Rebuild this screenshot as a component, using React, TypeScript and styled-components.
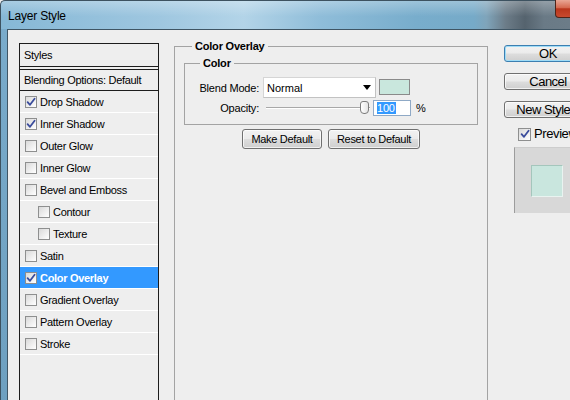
import styled, { createGlobalStyle } from "styled-components";

const GlobalStyle = createGlobalStyle`
  html, body {
    margin: 0;
    padding: 0;
  }
  body {
    width: 570px;
    height: 400px;
    overflow: hidden;
    background: #eeeeee;
    font-family: "Liberation Sans", Arial, sans-serif;
    font-size: 11px;
    color: #000;
  }
`;

interface StyleItem {
  label: string;
  checked?: boolean;
  indent?: boolean;
  active?: boolean;
}

const styleItems: StyleItem[] = [
  { label: "Drop Shadow", checked: true },
  { label: "Inner Shadow", checked: true },
  { label: "Outer Glow" },
  { label: "Inner Glow" },
  { label: "Bevel and Emboss" },
  { label: "Contour", indent: true },
  { label: "Texture", indent: true },
  { label: "Satin" },
  { label: "Color Overlay", checked: true, active: true },
  { label: "Gradient Overlay" },
  { label: "Pattern Overlay" },
  { label: "Stroke" },
];

const CheckMark = () => (
  <svg width="10" height="10" viewBox="0 0 10 10">
    <path
      d="M1.6 5.2 L4 7.8 L8.6 1.8"
      fill="none"
      stroke="#3a4c9c"
      strokeWidth="1.8"
      strokeLinecap="round"
      strokeLinejoin="round"
    />
  </svg>
);

const Check = ({ checked, size = 12 }: { checked?: boolean; size?: number }) => (
  <CheckBox $size={size}>{checked && <CheckMark />}</CheckBox>
);

const App = () => {
  return (
    <>
      <GlobalStyle />
      <Window>
        <TitleBar>
          <TitleText>Layer Style</TitleText>
          <CloseButton />
        </TitleBar>
        <Body>
          <Panel>
            <StylesList>
              <ListHeader>Styles</ListHeader>
              <BlendingRow>Blending Options: Default</BlendingRow>
              <Rows>
                {styleItems.map((item) => (
                  <StyleRow key={item.label} $indent={item.indent} $active={item.active}>
                    <Check checked={item.checked} />
                    <span>{item.label}</span>
                  </StyleRow>
                ))}
              </Rows>
            </StylesList>

            <MainColumn>
              <Group $outer>
                <GroupTitle $offset={8}>Color Overlay</GroupTitle>
                <Group>
                  <GroupTitle $offset={15}>Color</GroupTitle>
                  <FieldRow>
                    <FieldLabel>Blend Mode:</FieldLabel>
                    <Select>
                      <span>Normal</span>
                      <svg width="8" height="5" viewBox="0 0 8 5">
                        <path d="M0 0 H8 L4 5 Z" fill="#000" />
                      </svg>
                    </Select>
                    <Swatch />
                  </FieldRow>
                  <FieldRow $small>
                    <FieldLabel $gap={7}>Opacity:</FieldLabel>
                    <Slider>
                      <Track />
                      <Thumb />
                    </Slider>
                    <NumberInput>
                      <Selected>100</Selected>
                    </NumberInput>
                    <Unit>%</Unit>
                  </FieldRow>
                </Group>
                <ButtonRow>
                  <PushButton $width={80}>Make Default</PushButton>
                  <PushButton $width={92}>Reset to Default</PushButton>
                </ButtonRow>
              </Group>
            </MainColumn>

            <SideColumn>
              <DialogButton $default>OK</DialogButton>
              <DialogButton>Cancel</DialogButton>
              <DialogButton>New Style...</DialogButton>
              <PreviewToggle>
                <Check checked size={13} />
                <span>Preview</span>
              </PreviewToggle>
              <PreviewBox>
                <PreviewSwatch />
              </PreviewBox>
            </SideColumn>
          </Panel>
        </Body>
      </Window>
    </>
  );
};

const Window = styled.div`
  width: 640px;
  height: 400px;
  display: flex;
  flex-direction: column;
  overflow: hidden;
`;

const TitleBar = styled.div`
  height: 29px;
  flex-shrink: 0;
  display: flex;
  align-items: flex-start;
  justify-content: space-between;
  box-sizing: border-box;
  border-top: 1px solid #3d5260;
  border-left: 1px solid #3d5260;
  border-top-left-radius: 5px;
  background:
    linear-gradient(to bottom, rgba(255, 255, 255, 0.28), rgba(255, 255, 255, 0) 55%),
    linear-gradient(
      to right,
      #86b8d6 0%,
      #9fc7e0 25%,
      #b3d4e8 38%,
      #8fbdd9 50%,
      #78adcc 65%,
      #76aac8 74%,
      #7fa4ba 76%,
      #6c7c88 79%,
      #55636e 82%,
      #6a7a86 85%,
      #72828e 100%
    );
`;

const TitleText = styled.div`
  padding: 8px 0 0 7px;
  font-size: 12px;
  line-height: 14px;
  letter-spacing: -0.2px;
  color: #000;
`;

const CloseButton = styled.div`
  width: 43px;
  height: 18px;
  margin-top: -1px;
  margin-right: 42px;
  box-sizing: border-box;
  border: 1px solid #4e2419;
  border-top: none;
  border-radius: 0 0 4px 4px;
  background: linear-gradient(to bottom, #e9a795 0%, #d56a50 45%, #b9361c 52%, #c84a2e 100%);
`;

const Body = styled.div`
  flex: 1;
  display: flex;
  padding-left: 7px;
  background: linear-gradient(to bottom, #79abcb, #6d9fbf);
  border-left: 1px solid #3d5260;
`;

const Panel = styled.div`
  flex: 1;
  display: flex;
  align-items: flex-start;
  padding: 10px 0 0 11px;
  background: #eeeeee;
  border-top: 1px solid #3f5564;
  border-left: 1px solid #3f5564;
  margin-left: -1px;
`;

const StylesList = styled.div`
  width: 140px;
  height: 380px;
  margin-top: 3px;
  flex-shrink: 0;
  box-sizing: border-box;
  border: 1px solid #1c1c1c;
  letter-spacing: -0.3px;
`;

const ListHeader = styled.div`
  height: 22px;
  display: flex;
  align-items: center;
  padding-left: 4px;
  border-bottom: 1px solid #1c1c1c;
`;

const BlendingRow = styled.div`
  height: 20px;
  margin-top: 2px;
  display: flex;
  align-items: center;
  padding-left: 4px;
  border-top: 1px solid #1c1c1c;
  border-bottom: 1px solid #1c1c1c;
`;

const Rows = styled.div`
  padding-top: 0;
`;

const StyleRow = styled.div<{ $indent?: boolean; $active?: boolean }>`
  height: 21px;
  display: flex;
  align-items: center;
  gap: 3px;
  padding-left: ${(p) => (p.$indent ? 18 : 5)}px;
  border-bottom: 1px solid #ffffff;
  background: ${(p) => (p.$active ? "#3399ff" : "transparent")};
  color: ${(p) => (p.$active ? "#ffffff" : "#000")};
  font-weight: ${(p) => (p.$active ? "bold" : "normal")};
`;

const CheckBox = styled.span<{ $size: number }>`
  width: ${(p) => p.$size}px;
  height: ${(p) => p.$size}px;
  flex-shrink: 0;
  box-sizing: border-box;
  display: inline-flex;
  align-items: center;
  justify-content: center;
  border: 1px solid #8e8f8f;
  background: linear-gradient(135deg, #d9d9d9 0%, #f4f4f4 70%, #ffffff 100%);
`;

const MainColumn = styled.div`
  margin-left: 15px;
  flex-shrink: 0;
`;

const Group = styled.fieldset<{ $outer?: boolean }>`
  margin: 0;
  min-width: 0;
  box-sizing: border-box;
  width: ${(p) => (p.$outer ? 314 : 294)}px;
  height: ${(p) => (p.$outer ? "380px" : "auto")};
  padding: ${(p) => (p.$outer ? "4px 9px 0" : "7px 0 8px")};
  border: 1px solid #a3a3a3;
`;

const GroupTitle = styled.legend<{ $offset: number }>`
  margin-left: ${(p) => p.$offset}px;
  padding: 0 3px;
  font-weight: bold;
  font-size: 11px;
  line-height: 13px;
  letter-spacing: -0.2px;
`;

const FieldRow = styled.div<{ $small?: boolean }>`
  display: flex;
  align-items: center;
  height: ${(p) => (p.$small ? 16 : 21)}px;
  margin-top: ${(p) => (p.$small ? 2 : 0)}px;
`;

const FieldLabel = styled.span<{ $gap?: number }>`
  width: 74px;
  margin-right: ${(p) => p.$gap ?? 4}px;
  text-align: right;
  letter-spacing: -0.2px;
`;

const Select = styled.div`
  width: 113px;
  height: 21px;
  box-sizing: border-box;
  display: flex;
  align-items: center;
  justify-content: space-between;
  padding: 0 4px 0 3px;
  background: #ffffff;
  border: 1px solid #d5d5d5;
  border-right-color: #c2c2c2;
  border-bottom-color: #c2c2c2;
`;

const Swatch = styled.div`
  width: 31px;
  height: 16px;
  margin-left: 3px;
  margin-top: -2px;
  box-sizing: border-box;
  border: 1px solid #8a8a8a;
  background: #c9e7dd;
`;

const Slider = styled.div`
  position: relative;
  width: 104px;
  height: 16px;
  display: flex;
  align-items: center;
`;

const Track = styled.div`
  width: 100%;
  height: 2px;
  box-sizing: border-box;
  border-top: 1px solid #a8a8a8;
  border-bottom: 1px solid #ffffff;
  background: #d0d0d0;
`;

const Thumb = styled.div`
  position: absolute;
  right: 1px;
  top: 1px;
  width: 9px;
  height: 13px;
  box-sizing: border-box;
  border: 1px solid #7c7c7c;
  border-radius: 3px 3px 4px 4px;
  background: linear-gradient(to right, #ffffff, #e4e4e4);
`;

const NumberInput = styled.div`
  width: 38px;
  height: 16px;
  margin-left: 3px;
  box-sizing: border-box;
  display: flex;
  align-items: center;
  padding-left: 3px;
  background: #ffffff;
  border: 1px solid #8fa9c6;
`;

const Selected = styled.span`
  background: #3399ff;
  color: #ffffff;
  line-height: 12px;
  padding-right: 1px;
  letter-spacing: -0.2px;
`;

const Unit = styled.span`
  margin-left: 5px;
`;

const ButtonRow = styled.div`
  display: flex;
  justify-content: center;
  gap: 6px;
  margin-top: 4px;
`;

const PushButton = styled.button<{ $width: number }>`
  width: ${(p) => p.$width}px;
  height: 20px;
  padding: 0;
  font-family: "Liberation Sans", Arial, sans-serif;
  font-size: 11px;
  letter-spacing: -0.3px;
  color: #000;
  border: 1px solid #707070;
  border-radius: 3px;
  background: linear-gradient(to bottom, #f2f2f2 0%, #ebebeb 48%, #dddddd 52%, #cfcfcf 100%);
  box-shadow: inset 0 0 0 1px rgba(255, 255, 255, 0.7);
`;

const SideColumn = styled.div`
  margin-left: 16px;
  margin-top: 5px;
  display: flex;
  flex-direction: column;
  align-items: flex-start;
  gap: 11px;
`;

const DialogButton = styled.button<{ $default?: boolean }>`
  width: 88px;
  height: 17px;
  padding: 0;
  font-family: "Liberation Sans", Arial, sans-serif;
  font-size: 13px;
  line-height: 14px;
  letter-spacing: -0.5px;
  color: #000;
  border: 1px solid ${(p) => (p.$default ? "#3c7fb1" : "#707070")};
  border-radius: 3px;
  background: linear-gradient(to bottom, #f2f2f2 0%, #ebebeb 48%, #dddddd 52%, #cfcfcf 100%);
  box-shadow: inset 0 0 0 1px ${(p) => (p.$default ? "#9fdcf7" : "rgba(255,255,255,0.7)")};
`;

const PreviewToggle = styled.div`
  display: flex;
  align-items: center;
  gap: 3px;
  margin-left: 14px;
  margin-top: -2px;
  font-size: 13px;
  line-height: 14px;
  letter-spacing: -0.4px;
`;

const PreviewBox = styled.div`
  width: 90px;
  height: 66px;
  margin-left: 10px;
  margin-top: -5px;
  box-sizing: border-box;
  padding: 17px 0 0 16px;
  background: #d8d8d8;
  border-left: 1px solid #9c9c9c;
  border-top: 1px solid #cdcdcd;
`;

const PreviewSwatch = styled.div`
  width: 32px;
  height: 32px;
  box-sizing: border-box;
  background: #c9e6de;
  border: 1px solid #e9f3f0;
  border-top-color: #a4c6bc;
  border-left-color: #a4c6bc;
`;

export default App;
